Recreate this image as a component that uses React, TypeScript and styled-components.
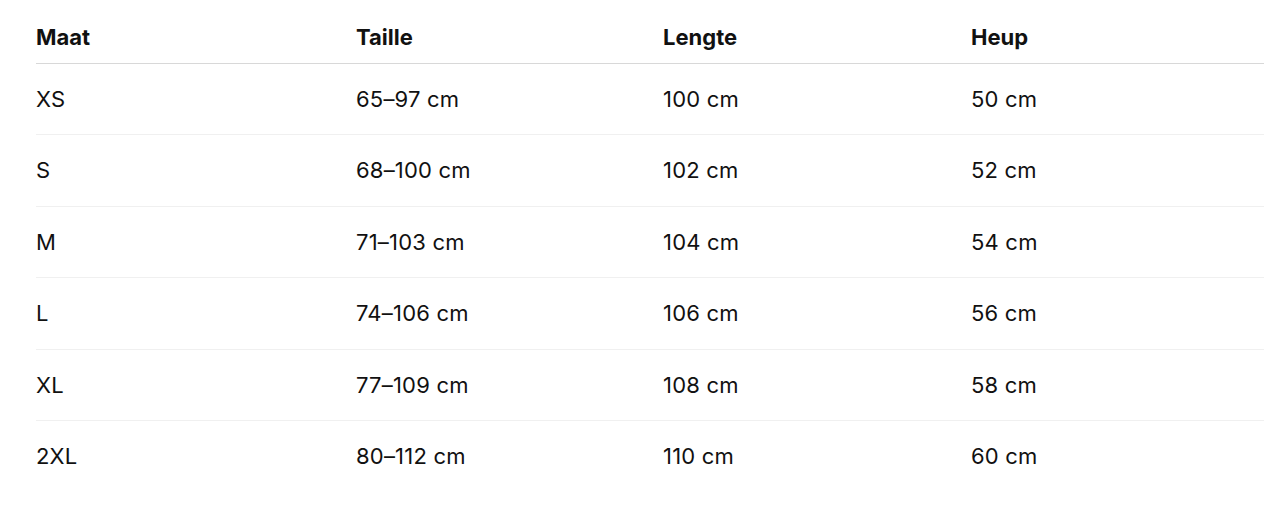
import React from "react";
import styled, { createGlobalStyle } from "styled-components";

const Global = createGlobalStyle`
  html, body { margin: 0; padding: 0; background: #ffffff; }
  body { font-family: Inter, "Noto Sans", "Liberation Sans", sans-serif; color: #1d1d1f; -webkit-font-smoothing: antialiased; }
`;

const Page = styled.div`
  padding: 10px 20px 0 36px;
`;

const Table = styled.table`
  width: 1228px;
  border-collapse: collapse;
  table-layout: fixed;
`;

const HeadCell = styled.th`
  text-align: left;
  font-weight: 700;
  font-size: 22px;
  line-height: 30px;
  color: #111111;
  padding: 12px 0 11px;
  border-bottom: 1px solid #d8d8d8;
`;

const Row = styled.tr<{ $last?: boolean }>`
  border-bottom: ${(p) => (p.$last ? "none" : "1px solid #f0f0f0")};
`;

const Cell = styled.td`
  font-size: 22px;
  line-height: 30.4px;
  padding: 20px 0;
  font-weight: 400;
  color: #111111;
  letter-spacing: 0.2px;
`;

const widths = [320, 307, 308, 293];
const headers = ["Maat", "Taille", "Lengte", "Heup"];
const rows = [
  ["XS", "65–97 cm", "100 cm", "50 cm"],
  ["S", "68–100 cm", "102 cm", "52 cm"],
  ["M", "71–103 cm", "104 cm", "54 cm"],
  ["L", "74–106 cm", "106 cm", "56 cm"],
  ["XL", "77–109 cm", "108 cm", "58 cm"],
  ["2XL", "80–112 cm", "110 cm", "60 cm"],
];

export default function App() {
  return (
    <>
      <Global />
      <Page>
        <Table>
          <colgroup>
            {widths.map((w, i) => (
              <col key={i} style={{ width: w }} />
            ))}
          </colgroup>
          <thead>
            <tr>
              {headers.map((h) => (
                <HeadCell key={h}>{h}</HeadCell>
              ))}
            </tr>
          </thead>
          <tbody>
            {rows.map((r, i) => (
              <Row key={r[0]} $last={i === rows.length - 1}>
                {r.map((c, j) => (
                  <Cell key={j}>{c}</Cell>
                ))}
              </Row>
            ))}
          </tbody>
        </Table>
      </Page>
    </>
  );
}
